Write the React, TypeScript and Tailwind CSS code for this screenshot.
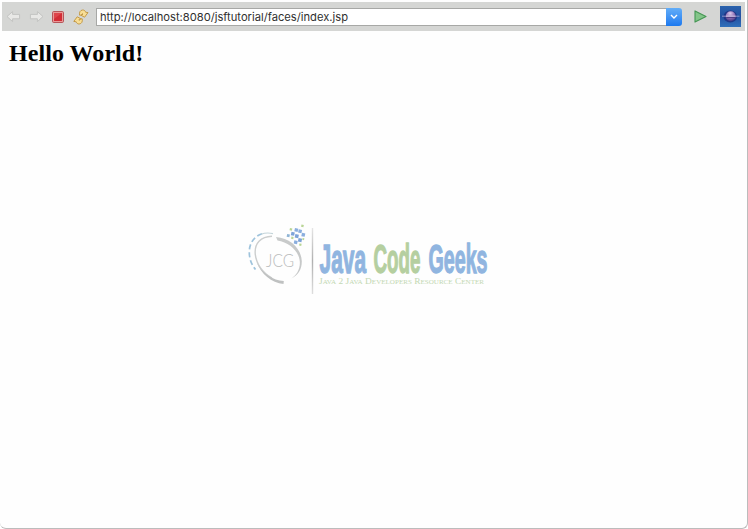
function BackArrow({ flip = false }: { flip?: boolean }) {
  return (
    <svg width="15" height="14" viewBox="0 0 15 14" className={flip ? "-scale-x-100" : ""}>
      <path d="M1 6.5 6.6 1.6V4.4H13.6V8.8H6.6V11.6Z" fill="#e8e8e6" stroke="#c3c4c2" strokeLinejoin="round" />
    </svg>
  );
}

function Toolbar() {
  return (
    <header className="ml-0.5 flex h-[29px] w-[743px] shrink-0 items-center bg-[#d5d6d4]">
      <div className="ml-1 flex w-[38px] justify-between">
        <BackArrow />
        <BackArrow flip />
      </div>
      <svg className="ml-2" width="12" height="12" viewBox="0 0 12 12">
        <rect x=".5" y=".5" width="11" height="11" rx="1.2" fill="#e99a98" stroke="#b5565a" />
        <rect x="2" y="2" width="8" height="8" fill="#d22c35" />
        <path d="M2 2H10L2 8Z" fill="#de454b" />
      </svg>
      <svg className="ml-[9px]" width="16" height="16" viewBox="0 0 16 16">
        <g fill="#f8de96" stroke="#c0933c" strokeWidth=".9" strokeLinejoin="round">
          <path d="M6.6 6.2C6 3.4 7.2 1.2 9.6 1 11.2 .9 12.2 1.8 12.6 3.2L15 3.6 11.6 8.2 8.2 6.4 10 5.2C9.4 4.4 8.6 4.8 8.4 6.2Z" />
          <path d="M9.2 9.8C9.8 12.6 8.6 14.8 6.2 15 4.6 15.1 3.6 14.2 3.2 12.8L.8 12.4 4.2 7.8 7.6 9.6 5.8 10.8C6.4 11.6 7.2 11.2 7.4 9.8Z" />
        </g>
      </svg>
      <div className="ml-[7px] flex h-[18px] w-[586px]">
        <div className="flex min-w-0 flex-1 items-center border border-r-0 border-[#a7a8a6] bg-white pl-[3px]">
          <svg width="250" height="16" className="shrink-0">
            <text x="0" y="11.5" textLength="248" lengthAdjust="spacingAndGlyphs" className="fill-[#303030] font-['Inter',sans-serif] text-[11px]">
              http://localhost:8080/jsftutorial/faces/index.jsp
            </text>
          </svg>
        </div>
        <div className="flex w-4 items-center justify-center rounded-r-[3px] bg-linear-to-b from-[#62adf8] to-[#1b79ef]">
          <svg width="8" height="6" viewBox="0 0 8 6">
            <path d="M1 1 4 4 7 1" fill="none" stroke="white" strokeWidth="1.4" />
          </svg>
        </div>
      </div>
      <svg className="ml-3" width="13" height="13" viewBox="0 0 13 13">
        <path d="M1 .9 12 6.5 1 12.1Z" fill="#83c589" stroke="#439652" strokeWidth="1.1" strokeLinejoin="round" />
      </svg>
      <svg className="ml-[13px]" width="21" height="21" viewBox="0 0 21 21">
        <defs>
          <linearGradient id="tile" x2="0" y2="1">
            <stop stopColor="#2a62ad" />
            <stop offset=".5" stopColor="#2450a0" />
            <stop offset="1" stopColor="#2f70bb" />
          </linearGradient>
          <radialGradient id="planet" cx=".45" cy=".22" r=".75">
            <stop stopColor="#dbc9ea" />
            <stop offset=".5" stopColor="#9a7cbc" />
            <stop offset="1" stopColor="#4d3c88" />
          </radialGradient>
        </defs>
        <rect width="21" height="21" fill="url(#tile)" />
        <ellipse cx="10.3" cy="10.4" rx="6.8" ry="6" fill="#203686" />
        <circle cx="10.7" cy="10.2" r="5" fill="url(#planet)" />
        <path d="M2 10.2H19.5" stroke="#a8a4d8" strokeWidth=".8" />
        <path d="M6 10.2H15.4" stroke="#ead9f0" strokeWidth=".8" />
        <path d="M6.2 11.4H15.2" stroke="#4c397f" strokeWidth="1" />
      </svg>
    </header>
  );
}

const pixels = [
  [50, 12, 2.4, "#b9d596"], [55, 12, 3.4, "#8aaede"], [61.5, 8.5, 2.4, "#b9d596"],
  [51.5, 15.8, 3.4, "#7da3d8"], [58.8, 13.2, 3.4, "#8aaede"], [47.2, 18, 2.8, "#8fb4d5"],
  [55.4, 18, 3.6, "#7da3d8"], [62, 16.8, 3.4, "#8aaede"], [51.5, 20.6, 2.2, "#b9d596"],
  [58.6, 22, 3.6, "#7da3d8"], [54.4, 24.2, 3.4, "#8aaede"], [62.6, 22, 1.8, "#b9d596"],
  [59.5, 27.4, 2.2, "#b9d596"],
] as const;

function Logo() {
  return (
    <svg width="270" height="84" viewBox="0 0 270 84" role="img" aria-label="Java Code Geeks">
      <defs>
        <linearGradient id="divider" x1="0" x2="0" y1="12" y2="78" gradientUnits="userSpaceOnUse">
          <stop stopColor="#e5e5e5" />
          <stop offset=".5" stopColor="#b0b0b0" />
          <stop offset="1" stopColor="#dedede" />
        </linearGradient>
        <linearGradient id="ring" x1="0" y1="0" x2="1" y2="1">
          <stop stopColor="#c9cbcb" />
          <stop offset="1" stopColor="#c6c8c8" />
        </linearGradient>
      </defs>
      <path d="M22 17.8C14 20.5 9.5 27 9.3 35.5 9.2 42.5 11.3 48.5 15.5 53.5" fill="none" stroke="#9ec3dc" strokeWidth="1.7" strokeDasharray="5.2 2.8" />
      <path d="M21 18.3C24.5 16.9 29 16.7 33 17.6" fill="none" stroke="#c5d5da" strokeWidth="1.2" />
      <path d="M32 20.2C20.5 20.5 14.5 27.5 15.2 37.5 16 47.5 22.5 57 32 62" fill="none" stroke="#cccece" strokeWidth="1.4" />
      <path d="M36 21C50.5 22 61.3 33 61.8 45 62 53.2 58 60 51 62.5 56.8 59 60.3 53 59.8 45.5 58.8 34.5 49 26.6 37.5 24.5Z" fill="url(#ring)" />
      <path d="M16.5 46C22.5 58 33 64.3 43.8 65L43.5 68C31.5 66.7 21 58 16.5 46Z" fill="#bfc1c1" />
      {pixels.map(([x, y, size, color], i) => (
        <rect key={i} x={x} y={y} width={size} height={size} fill={color} transform={`rotate(12 ${x} ${y})`} />
      ))}
      <text x="26" y="50.5" textLength="28" lengthAdjust="spacingAndGlyphs" className="fill-[#b9bbbb] font-['Lato',sans-serif] text-[18px] font-light">JCG</text>
      <path d="M72.5 12V78" stroke="url(#divider)" strokeWidth="1.4" />
      <g className="font-['Liberation_Sans',sans-serif] text-[40px] font-bold" strokeWidth="1.3">
        <text x="79.5" y="57.3" textLength="46.5" lengthAdjust="spacingAndGlyphs" fill="#90b5e0" stroke="#90b5e0">Java</text>
        <text x="133.5" y="57.3" textLength="47" lengthAdjust="spacingAndGlyphs" fill="#b5cfa0" stroke="#b5cfa0">Code</text>
        <text x="188.5" y="57.3" textLength="59" lengthAdjust="spacingAndGlyphs" fill="#90b5e0" stroke="#90b5e0">Geeks</text>
      </g>
      <text x="79" y="67.5" textLength="165" lengthAdjust="spacingAndGlyphs" className="fill-[#c3d8b3] font-['Liberation_Serif',serif] text-[8px] [font-variant-caps:small-caps]">
        Java 2 Java Developers Resource Center
      </text>
    </svg>
  );
}

export default function App() {
  return (
    <div className="h-[529px] w-[748px] bg-white">
      <div className="flex h-[528.5px] w-[748px] flex-col overflow-hidden rounded-b-[6px] border-r border-b border-[#bcbcbc] bg-[#fefefe] pt-0.5">
        <Toolbar />
        <main className="flex flex-1 flex-col">
          <h1 className="mt-2 ml-[9px] font-['Liberation_Serif',serif] text-[24px] leading-7 font-bold tracking-[0.06px] text-black">Hello World!</h1>
          <div className="mt-[149px] ml-60">
            <Logo />
          </div>
        </main>
      </div>
    </div>
  );
}
